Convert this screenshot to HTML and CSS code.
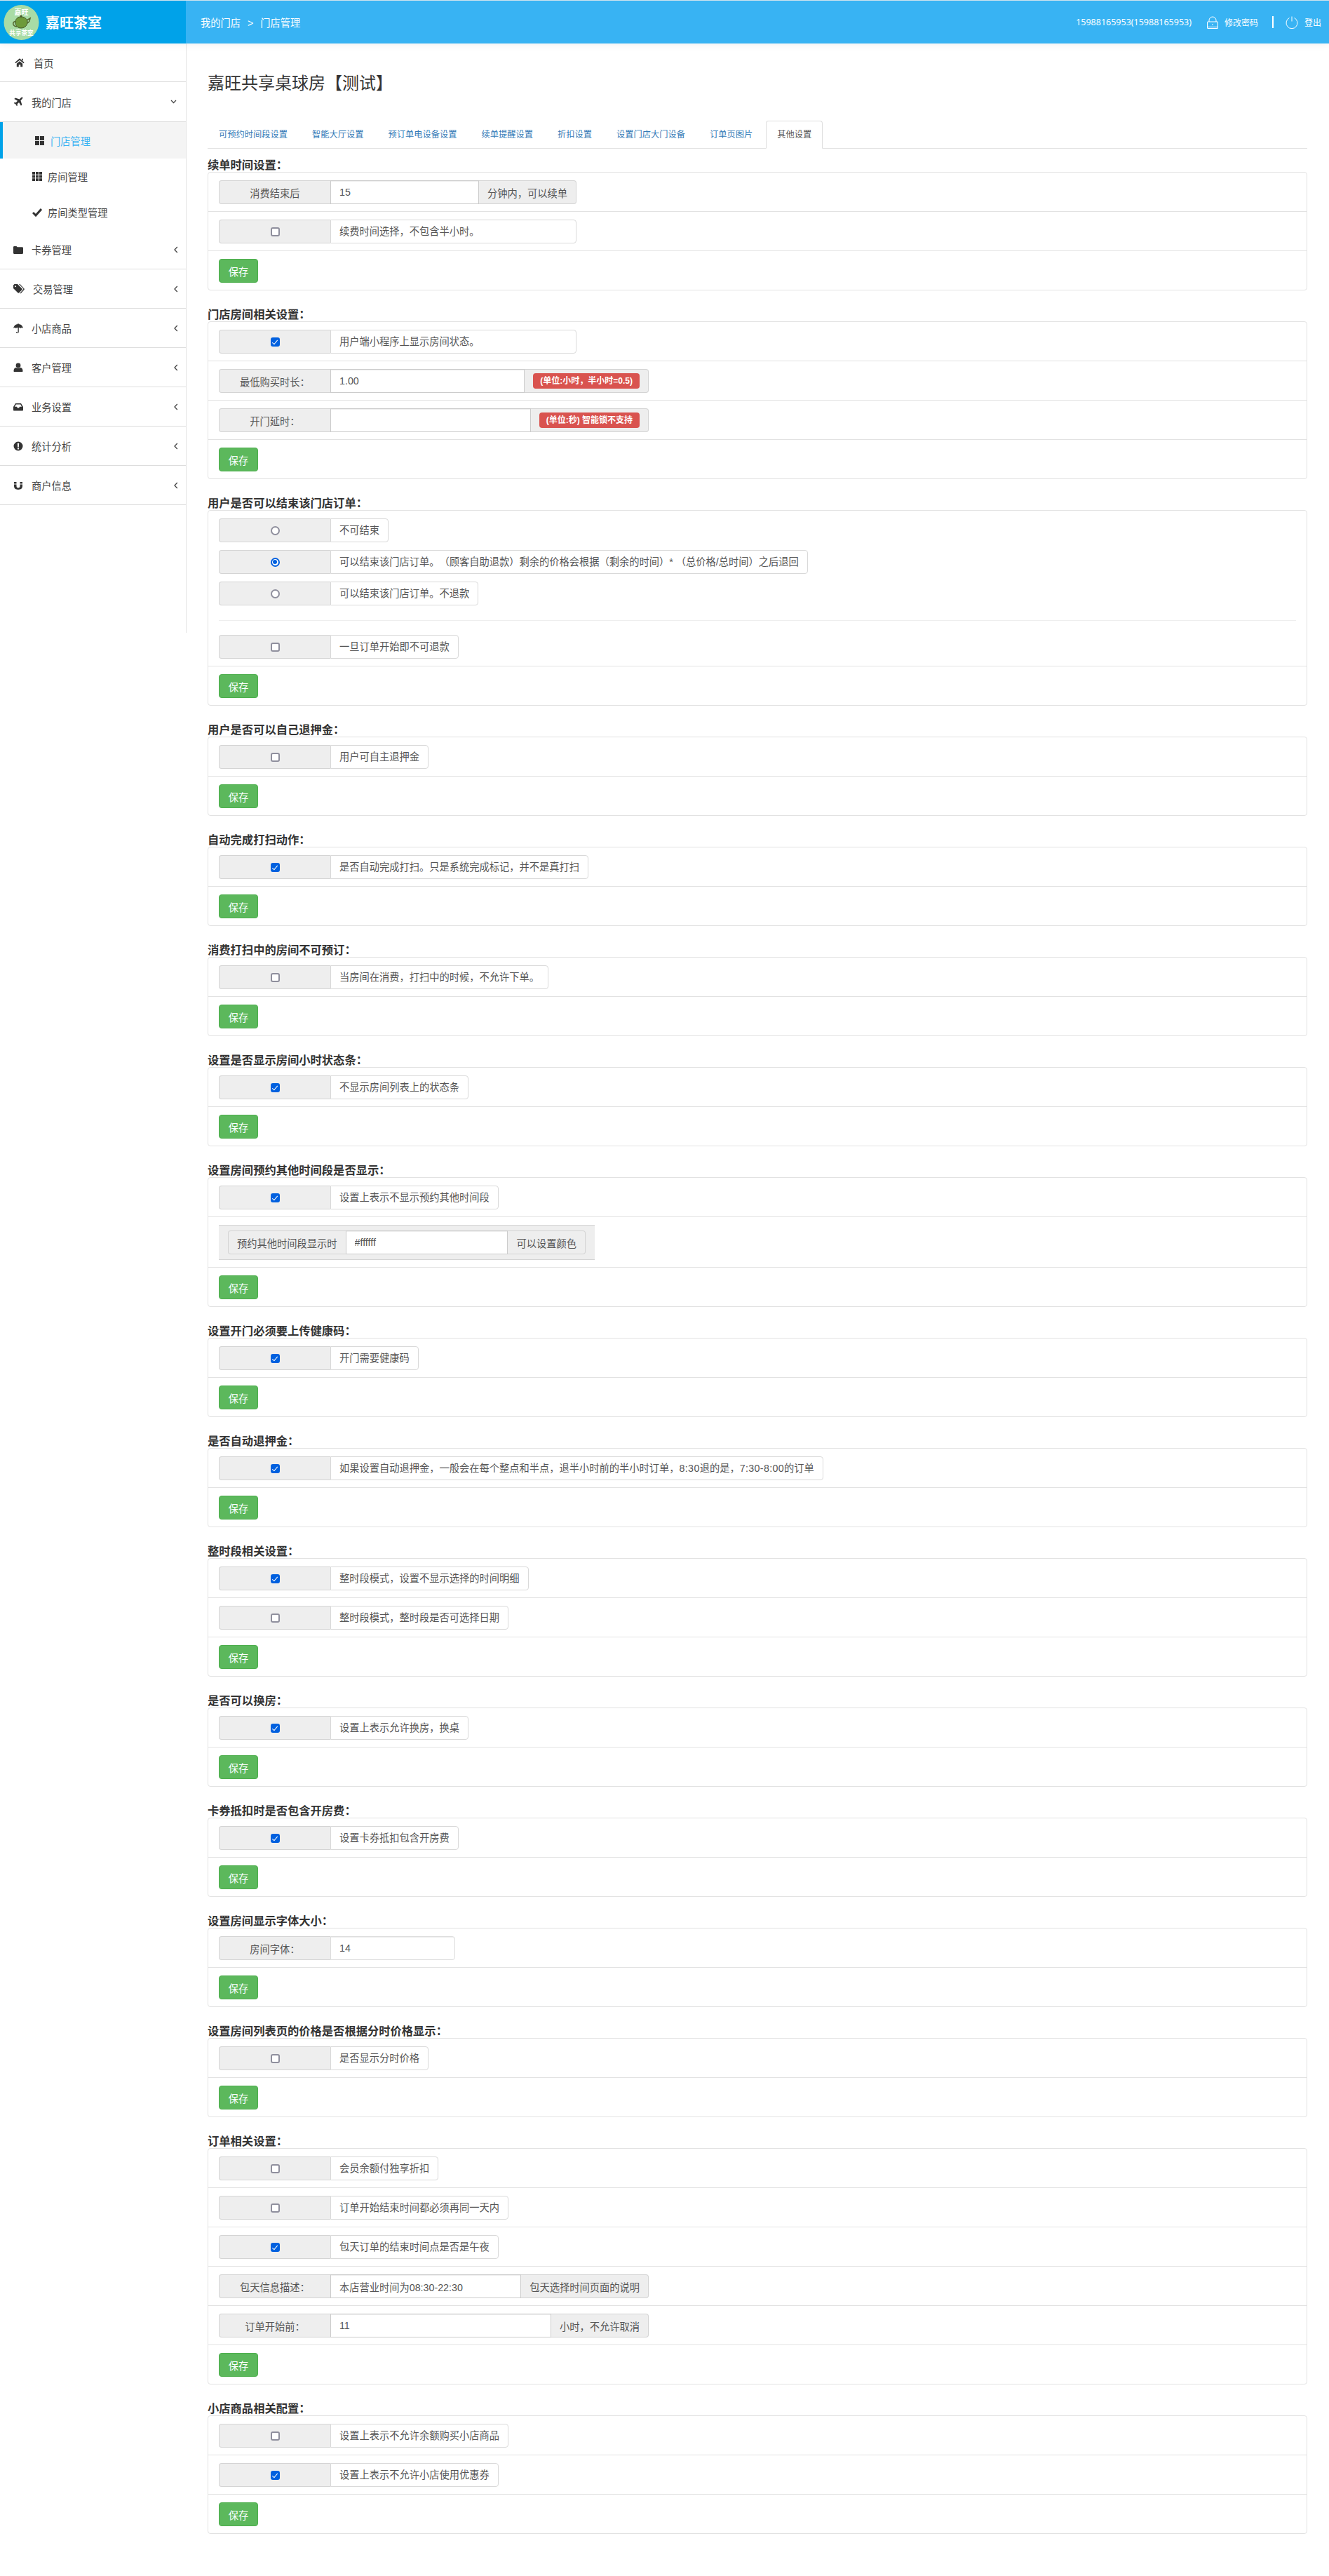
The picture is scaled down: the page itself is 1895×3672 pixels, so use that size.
FILE: index.html
```html
<!DOCTYPE html>
<html lang="zh-CN">
<head>
  <meta charset="UTF-8">
  <title>门店管理</title>
  <link rel="stylesheet" href="styles.css">
</head>
<body>
  <svg class="sprite" width="0" height="0">
    <symbol id="chev-left" viewBox="0 0 6 10"><path d="M4.8 1 1 5l3.8 4" fill="none" stroke="#444" stroke-width="1.3"/></symbol>
  </svg>

  <!-- top bar -->
  <header class="topbar">
    <div class="brand">
      <svg class="logo" width="51" height="50" viewBox="0 0 51 50">
        <circle cx="25.5" cy="25" r="25" fill="#a9dca6"/>
        <text x="25.5" y="14" class="logo-text" font-size="10">嘉旺</text>
        <path d="M18 24c-3-1-5 1-4 4 1 2 3 3 5 3M33 22l5-3-1 4c-1 2-2 3-4 3" fill="none" stroke="#54682f" stroke-width="1.6"/>
        <path d="M17 23c1-4 4-6 8-6s8 2 9 6c1 5-3 10-9 10s-9-5-8-10z" fill="#6d9a3a" stroke="#44562a"/>
        <circle cx="25" cy="16" r="1.6" fill="#44562a"/>
        <text x="25.5" y="43" class="logo-text" font-size="8.6">共享茶室</text>
      </svg>
      <span class="brand-name">嘉旺茶室</span>
    </div>
    <div class="topbar-main">
      <div class="crumbs"><span>我的门店</span><span class="crumb-sep">&gt;</span><span>门店管理</span></div>
      <div class="user-tools">
        <span class="user-name">15988165953(15988165953)</span>
        <svg class="tool-icon" width="16" height="18" viewBox="0 0 16 18" fill="none" stroke="#fff" stroke-width="1">
          <path d="M3 8V6a5 5 0 0 1 10 0v2"/><rect x=".5" y="8" width="15" height="9.5" rx=".5"/><path d="M.5 15.5h15M8 11v2" />
        </svg>
        <a class="tool-link">修改密码</a>
        <span class="tool-sep"></span>
        <svg class="tool-icon power" width="18" height="18" viewBox="0 0 18 18" fill="none" stroke="#fff" stroke-width="1">
          <path d="M5.5 2.5a8 8 0 1 0 7 0M9 .5v7"/>
        </svg>
        <a class="tool-link">登出</a>
      </div>
    </div>
  </header>

  <div class="layout">
    <!-- left nav -->
    <nav class="sidebar">
      <a class="nav-item nav-home">
        <svg class="nav-icon" width="14" height="14" viewBox="0 0 16 16"><path d="M8 1.5 15.6 8l-1.2 1.4L8 4.2 1.6 9.4.4 8zM11.5 2h2v3.4l-2-1.7zM3.2 10 8 6l4.8 4v5H9.4v-3.4H6.6V15H3.2z"/></svg>
        <span>首页</span>
      </a>
      <a class="nav-item nav-open">
        <svg class="nav-icon" width="14" height="14" viewBox="0 0 16 16"><path d="M15.4 1c-.7-.8-2-.5-2.900.4L10 3.900 3.200 1.700 1.500 3.300l5.400 3.300-2.700 2.800-2.200-.4L.7 10.300l3.100 1.800 1.800 3.100 1.200-1.200-.4-2.200 2.800-2.700 3.300 5.400 1.600-1.700-2.200-6.800 2.500-2.500c.9-.9 1.200-2.200.5-2.800z"/></svg>
        <span>我的门店</span>
        <svg class="chev-down" width="9" height="6" viewBox="0 0 9 6"><path d="M1 1l3.500 3.500L8 1" fill="none" stroke="#444" stroke-width="1.300"/></svg>
      </a>
      <a class="nav-sub nav-sub-active">
        <svg width="13" height="13" viewBox="0 0 13 13"><path d="M0 0h6v6H0zM7 0h6v6H7zM0 7h6v6H0zM7 7h6v6H7z"/></svg>
        <span>门店管理</span>
      </a>
      <a class="nav-sub">
        <svg width="14" height="13" viewBox="0 0 14 13"><path d="M0 0h4v3.700H0zM5 0h4v3.700H5zM10 0h4v3.700h-4zM0 4.700h4v3.700H0zM5 4.700h4v3.700H5zM10 4.700h4v3.700h-4zM0 9.300h4V13H0zM5 9.300h4V13H5zM10 9.300h4V13h-4z"/></svg>
        <span>房间管理</span>
      </a>
      <a class="nav-sub">
        <svg width="14" height="13" viewBox="0 0 14 13"><path d="M1 7l4 4 8-9" fill="none" stroke="#333" stroke-width="3"/></svg>
        <span>房间类型管理</span>
      </a>
      <a class="nav-item">
        <svg class="nav-icon" width="14" height="14" viewBox="0 0 14 14"><path d="M0 3.500C0 2.500.5 2 1.500 2h3l1.200 1.300H12.500c1 0 1.500.5 1.500 1.500v6.700c0 .8-.6 1.500-1.500 1.500h-11C.6 13 0 12.300 0 11.500z"/></svg>
        <span>卡券管理</span>
        <svg class="chev" width="6" height="10"><use href="#chev-left"/></svg>
      </a>
      <a class="nav-item">
        <svg class="nav-icon" width="16" height="14" viewBox="0 0 16 14"><path d="M0 1.500 1.500 0H6l6.500 6.500a1 1 0 0 1 0 1.400L8 12.500a1 1 0 0 1-1.400 0L0 6zM3 2.200a1 1 0 1 0 0 2 1 1 0 0 0 0-2zM8 0h1.500l6 6.500a1 1 0 0 1 0 1.400l-4.500 5c-.5.500-1.200.5-1.700.1l4.700-5.300c.4-.5.400-1 0-1.400z"/></svg>
        <span>交易管理</span>
        <svg class="chev" width="6" height="10"><use href="#chev-left"/></svg>
      </a>
      <a class="nav-item">
        <svg class="nav-icon" width="14" height="14" viewBox="0 0 14 14"><path d="M6.500 0h1v1C11 1.300 13.500 3.500 14 7c-1-1.300-2.500-1.300-3.500 0-.7-1-1.800-1.300-2.700-1V12c0 1.300-.8 2-2 2s-2-.7-2-2h1.200c0 .6.200 1 .8 1s.7-.4.700-1V6c-.9-.3-2 0-2.700 1C2.800 5.700 1 5.700 0 7c.5-3.500 3-5.700 6.500-6z"/></svg>
        <span>小店商品</span>
        <svg class="chev" width="6" height="10"><use href="#chev-left"/></svg>
      </a>
      <a class="nav-item">
        <svg class="nav-icon" width="14" height="14" viewBox="0 0 14 14"><circle cx="7" cy="4" r="3.400"/><path d="M1.500 13c-.6 0-1-.4-1-1 0-2.800 1.200-4.800 3.300-5 .8.700 1.900 1 3.200 1s2.400-.3 3.200-1c2.100.2 3.300 2.200 3.300 5 0 .6-.4 1-1 1z"/></svg>
        <span>客户管理</span>
        <svg class="chev" width="6" height="10"><use href="#chev-left"/></svg>
      </a>
      <a class="nav-item">
        <svg class="nav-icon" width="14" height="14" viewBox="0 0 14 14"><path d="M3 2h8l3 5v4.500c0 .5-.5 1-1 1H1c-.5 0-1-.5-1-1V7zm.8 1.500L2 6.800h3l.9 1.700h2.200L9 6.800h3l-1.800-3.300z"/></svg>
        <span>业务设置</span>
        <svg class="chev" width="6" height="10"><use href="#chev-left"/></svg>
      </a>
      <a class="nav-item">
        <svg class="nav-icon" width="14" height="14" viewBox="0 0 14 14"><path fill-rule="evenodd" d="M7 .5a6.500 6.500 0 1 1 0 13 6.500 6.500 0 0 1 0-13zM5.800 2.800l.4 5.600h1.600l.4-5.600zM5.900 9.500v2h2.200v-2z"/></svg>
        <span>统计分析</span>
        <svg class="chev" width="6" height="10"><use href="#chev-left"/></svg>
      </a>
      <a class="nav-item">
        <svg class="nav-icon" width="14" height="14" viewBox="0 0 14 14"><path d="M1 2h3.500v2.500H1zM9.500 2H13v2.500H9.500zM1 5.500h3.500v2.300c0 1.700 1 2.700 2.500 2.700s2.500-1 2.500-2.700V5.500H13v2.300c0 3.400-2.300 5.200-6 5.200S1 11.200 1 7.800z"/></svg>
        <span>商户信息</span>
        <svg class="chev" width="6" height="10"><use href="#chev-left"/></svg>
      </a>
    </nav>

    <main class="content">
      <h1 class="page-title">嘉旺共享桌球房【测试】</h1>

      <ul class="tabs">
        <li><a>可预约时间段设置</a></li>
        <li><a>智能大厅设置</a></li>
        <li><a>预订单电设备设置</a></li>
        <li><a>续单提醒设置</a></li>
        <li><a>折扣设置</a></li>
        <li><a>设置门店大门设备</a></li>
        <li><a>订单页图片</a></li>
        <li class="active"><a>其他设置</a></li>
      </ul>

      <section class="section">
        <h4 class="section-title">续单时间设置：</h4>
        <div class="panel">
          <div class="row">
            <div class="group w-510">
              <span class="addon addon-label">消费结束后</span>
              <input class="field" type="text" value="15">
              <span class="addon">分钟内，可以续单</span>
            </div>
          </div>
          <div class="row">
            <div class="group w-510">
              <span class="addon addon-label"><input type="checkbox"></span>
              <span class="note note-fill">续费时间选择，不包含半小时。</span>
            </div>
          </div>
          <div class="row"><button class="btn-save">保存</button></div>
        </div>
      </section>

      <section class="section">
        <h4 class="section-title">门店房间相关设置：</h4>
        <div class="panel">
          <div class="row">
            <div class="group w-510">
              <span class="addon addon-label"><input type="checkbox" checked></span>
              <span class="note note-fill">用户端小程序上显示房间状态。</span>
            </div>
          </div>
          <div class="row">
            <div class="group w-613">
              <span class="addon addon-label">最低购买时长：</span>
              <input class="field" type="text" value="1.00">
              <span class="addon"><span class="tag-red">(单位:小时，半小时=0.5)</span></span>
            </div>
          </div>
          <div class="row">
            <div class="group w-613">
              <span class="addon addon-label">开门延时：</span>
              <input class="field" type="text">
              <span class="addon"><span class="tag-red">(单位:秒) 智能锁不支持</span></span>
            </div>
          </div>
          <div class="row"><button class="btn-save">保存</button></div>
        </div>
      </section>

      <section class="section">
        <h4 class="section-title">用户是否可以结束该门店订单：</h4>
        <div class="panel">
          <div class="row">
            <div class="group stacked">
              <span class="addon addon-label"><input type="radio" name="finish"></span>
              <span class="note">不可结束</span>
            </div>
            <div class="group stacked">
              <span class="addon addon-label"><input type="radio" name="finish" checked></span>
              <span class="note">可以结束该门店订单。（顾客自助退款）剩余的价格会根据（剩余的时间）* （总价格/总时间）之后退回</span>
            </div>
            <div class="group">
              <span class="addon addon-label"><input type="radio" name="finish"></span>
              <span class="note">可以结束该门店订单。不退款</span>
            </div>
            <hr class="row-rule">
            <div class="group">
              <span class="addon addon-label"><input type="checkbox"></span>
              <span class="note">一旦订单开始即不可退款</span>
            </div>
          </div>
          <div class="row"><button class="btn-save">保存</button></div>
        </div>
      </section>

      <section class="section">
        <h4 class="section-title">用户是否可以自己退押金：</h4>
        <div class="panel">
          <div class="row">
            <div class="group">
              <span class="addon addon-label"><input type="checkbox"></span>
              <span class="note">用户可自主退押金</span>
            </div>
          </div>
          <div class="row"><button class="btn-save">保存</button></div>
        </div>
      </section>

      <section class="section">
        <h4 class="section-title">自动完成打扫动作：</h4>
        <div class="panel">
          <div class="row">
            <div class="group">
              <span class="addon addon-label"><input type="checkbox" checked></span>
              <span class="note">是否自动完成打扫。只是系统完成标记，并不是真打扫</span>
            </div>
          </div>
          <div class="row"><button class="btn-save">保存</button></div>
        </div>
      </section>

      <section class="section">
        <h4 class="section-title">消费打扫中的房间不可预订：</h4>
        <div class="panel">
          <div class="row">
            <div class="group">
              <span class="addon addon-label"><input type="checkbox"></span>
              <span class="note">当房间在消费，打扫中的时候，不允许下单。</span>
            </div>
          </div>
          <div class="row"><button class="btn-save">保存</button></div>
        </div>
      </section>

      <section class="section">
        <h4 class="section-title">设置是否显示房间小时状态条：</h4>
        <div class="panel">
          <div class="row">
            <div class="group">
              <span class="addon addon-label"><input type="checkbox" checked></span>
              <span class="note">不显示房间列表上的状态条</span>
            </div>
          </div>
          <div class="row"><button class="btn-save">保存</button></div>
        </div>
      </section>

      <section class="section">
        <h4 class="section-title">设置房间预约其他时间段是否显示：</h4>
        <div class="panel">
          <div class="row">
            <div class="group">
              <span class="addon addon-label"><input type="checkbox" checked></span>
              <span class="note">设置上表示不显示预约其他时间段</span>
            </div>
          </div>
          <div class="row">
            <div class="color-box">
              <div class="group w-510">
                <span class="addon">预约其他时间段显示时</span>
                <input class="field" type="text" value="#ffffff">
                <span class="addon">可以设置颜色</span>
              </div>
            </div>
          </div>
          <div class="row"><button class="btn-save">保存</button></div>
        </div>
      </section>

      <section class="section">
        <h4 class="section-title">设置开门必须要上传健康码：</h4>
        <div class="panel">
          <div class="row">
            <div class="group">
              <span class="addon addon-label"><input type="checkbox" checked></span>
              <span class="note">开门需要健康码</span>
            </div>
          </div>
          <div class="row"><button class="btn-save">保存</button></div>
        </div>
      </section>

      <section class="section">
        <h4 class="section-title">是否自动退押金：</h4>
        <div class="panel">
          <div class="row">
            <div class="group">
              <span class="addon addon-label"><input type="checkbox" checked></span>
              <span class="note">如果设置自动退押金，一般会在每个整点和半点，退半小时前的半小时订单，<span class="digits">8:30</span>退的是，<span class="digits">7:30-8:00</span>的订单</span>
            </div>
          </div>
          <div class="row"><button class="btn-save">保存</button></div>
        </div>
      </section>

      <section class="section">
        <h4 class="section-title">整时段相关设置：</h4>
        <div class="panel">
          <div class="row">
            <div class="group">
              <span class="addon addon-label"><input type="checkbox" checked></span>
              <span class="note">整时段模式，设置不显示选择的时间明细</span>
            </div>
          </div>
          <div class="row">
            <div class="group">
              <span class="addon addon-label"><input type="checkbox"></span>
              <span class="note">整时段模式，整时段是否可选择日期</span>
            </div>
          </div>
          <div class="row"><button class="btn-save">保存</button></div>
        </div>
      </section>

      <section class="section">
        <h4 class="section-title">是否可以换房：</h4>
        <div class="panel">
          <div class="row">
            <div class="group">
              <span class="addon addon-label"><input type="checkbox" checked></span>
              <span class="note">设置上表示允许换房，换桌</span>
            </div>
          </div>
          <div class="row"><button class="btn-save">保存</button></div>
        </div>
      </section>

      <section class="section">
        <h4 class="section-title">卡券抵扣时是否包含开房费：</h4>
        <div class="panel">
          <div class="row">
            <div class="group">
              <span class="addon addon-label"><input type="checkbox" checked></span>
              <span class="note">设置卡券抵扣包含开房费</span>
            </div>
          </div>
          <div class="row"><button class="btn-save">保存</button></div>
        </div>
      </section>

      <section class="section">
        <h4 class="section-title">设置房间显示字体大小：</h4>
        <div class="panel">
          <div class="row">
            <div class="group w-337">
              <span class="addon addon-label">房间字体：</span>
              <input class="field field-end" type="text" value="14">
            </div>
          </div>
          <div class="row"><button class="btn-save">保存</button></div>
        </div>
      </section>

      <section class="section">
        <h4 class="section-title">设置房间列表页的价格是否根据分时价格显示：</h4>
        <div class="panel">
          <div class="row">
            <div class="group">
              <span class="addon addon-label"><input type="checkbox"></span>
              <span class="note">是否显示分时价格</span>
            </div>
          </div>
          <div class="row"><button class="btn-save">保存</button></div>
        </div>
      </section>

      <section class="section">
        <h4 class="section-title">订单相关设置：</h4>
        <div class="panel">
          <div class="row">
            <div class="group">
              <span class="addon addon-label"><input type="checkbox"></span>
              <span class="note">会员余额付独享折扣</span>
            </div>
          </div>
          <div class="row">
            <div class="group">
              <span class="addon addon-label"><input type="checkbox"></span>
              <span class="note">订单开始结束时间都必须再同一天内</span>
            </div>
          </div>
          <div class="row">
            <div class="group">
              <span class="addon addon-label"><input type="checkbox" checked></span>
              <span class="note">包天订单的结束时间点是否是午夜</span>
            </div>
          </div>
          <div class="row">
            <div class="group w-613">
              <span class="addon addon-label">包天信息描述：</span>
              <input class="field" type="text" value="本店营业时间为08:30-22:30">
              <span class="addon">包天选择时间页面的说明</span>
            </div>
          </div>
          <div class="row">
            <div class="group w-613">
              <span class="addon addon-label">订单开始前：</span>
              <input class="field" type="text" value="11">
              <span class="addon">小时，不允许取消</span>
            </div>
          </div>
          <div class="row"><button class="btn-save">保存</button></div>
        </div>
      </section>

      <section class="section">
        <h4 class="section-title">小店商品相关配置：</h4>
        <div class="panel">
          <div class="row">
            <div class="group">
              <span class="addon addon-label"><input type="checkbox"></span>
              <span class="note">设置上表示不允许余额购买小店商品</span>
            </div>
          </div>
          <div class="row">
            <div class="group">
              <span class="addon addon-label"><input type="checkbox" checked></span>
              <span class="note">设置上表示不允许小店使用优惠券</span>
            </div>
          </div>
          <div class="row"><button class="btn-save">保存</button></div>
        </div>
      </section>
    </main>
  </div>
</body>
</html>
```

FILE: styles.css
```css
* {
  box-sizing: border-box;
}

body {
  margin: 0;
  font-family: "Liberation Sans", "Noto Sans CJK SC", sans-serif;
  font-size: 14.25px;
  text-spacing-trim: space-all;
  color: #555;
  background-color: #fff;
}

.sprite {
  position: absolute;
}

/* top bar */
.topbar {
  display: flex;
  height: 62px;
  border-top: 1px solid #cfe3ee;
  color: #fff;
  box-shadow: 0 2px 10px rgba(0, 0, 0, 0.06);
  position: relative;
}

.brand {
  display: flex;
  align-items: center;
  width: 265px;
  padding-left: 5px;
  background-color: #00a2e9;
}

.logo-text {
  fill: #fff;
  font-weight: 700;
  text-anchor: middle;
}

.brand-name {
  margin-left: 9px;
  font-size: 20px;
  font-weight: 700;
}

.topbar-main {
  flex: 1;
  display: flex;
  align-items: center;
  justify-content: space-between;
  padding: 0 11px 0 21px;
  background-color: #38b3f3;
}

.crumb-sep {
  margin: 0 10px;
}

.user-tools {
  display: flex;
  align-items: center;
  font-size: 12px;
}

.user-name {
  font-family: "Noto Sans", "Noto Sans CJK SC", sans-serif;
  font-size: 12.5px;
  margin-right: 22px;
}

.tool-icon {
  margin-right: 9px;
}

.tool-sep {
  width: 2px;
  height: 17px;
  margin: 0 17px 0 20px;
  background-color: #fff;
}

/* sidebar */
.layout {
  display: flex;
  align-items: flex-start;
}

.sidebar {
  flex: none;
  width: 266px;
  height: 840px;
  border-right: 1px solid #e4e4e4;
}

.nav-item,
.nav-sub {
  display: flex;
  align-items: center;
  color: #444;
}

.nav-item {
  height: 56px;
  padding: 0 11px 0 19px;
  border-bottom: 1px solid #ddd;
}

.nav-item svg {
  fill: #333;
}

.nav-item span {
  flex: 1;
}

.nav-icon {
  margin-right: 12px;
}

.nav-home {
  height: 55px;
  padding-left: 21px;
}

.nav-home .nav-icon {
  margin-right: 13px;
}

.nav-open {
  height: 57px;
}

.chev-down {
  margin-right: 2px;
}

.nav-sub {
  height: 51px;
  padding-left: 46px;
  color: #444;
}

.nav-sub svg {
  margin-right: 8px;
  fill: #333;
}

.nav-sub-active {
  height: 52px;
  padding-left: 46px;
  background-color: #f4f4f4;
  border-left: 4px solid #00a2e9;
  color: #38b3f3;
}

.nav-sub-active svg {
  margin-right: 9px;
}

/* main column */
.content {
  flex: 1;
  min-width: 0;
  padding: 40px 31px 37px 30px;
}

.page-title {
  margin: 0 0 36px;
  font-size: 24px;
  font-weight: 400;
  line-height: 34px;
  color: #333;
}

.tabs {
  display: flex;
  height: 40px;
  margin: 0 0 13px;
  padding: 0;
  list-style: none;
  border-bottom: 1px solid #e2e2e2;
  font-size: 12.25px;
}

.tabs li {
  margin-right: 3px;
  height: 40px;
}

.tabs a {
  display: block;
  height: 40px;
  padding: 10px 15px;
  border: 1px solid transparent;
  line-height: 18px;
  color: #337ab7;
}

.tabs .active a {
  background-color: #fff;
  border-color: #ddd #ddd #fff;
  border-radius: 4px 4px 0 0;
  color: #555;
}

.section {
  margin-bottom: 24px;
}

.section-title {
  margin: 0;
  font-size: 16.3px;
  font-weight: 700;
  line-height: 20px;
  color: #333;
}

.panel {
  border: 1px solid #e2e2e2;
  border-radius: 4px;
}

.row {
  padding: 11px 15px 10px;
  border-bottom: 1px solid #e2e2e2;
}

.row:last-child {
  border-bottom: none;
}

.row-rule {
  height: 1px;
  margin: 21px 0 20px;
  border: none;
  background-color: #eee;
}

/* input groups */
.group {
  display: flex;
  width: fit-content;
  height: 34px;
}

.group.stacked {
  margin-bottom: 11px;
}

.w-510 {
  width: 510px;
}

.w-613 {
  width: 613px;
}

.w-337 {
  width: 337px;
}

.addon {
  flex: none;
  display: flex;
  align-items: center;
  justify-content: center;
  padding: 0 12px;
  background-color: #eee;
  border: 1px solid #d4d4d4;
  border-radius: 0 4px 4px 0;
  border-left: none;
  white-space: nowrap;
}

.addon:first-child {
  border-left: 1px solid #d4d4d4;
  border-right: none;
  border-radius: 4px 0 0 4px;
}

.addon-label {
  width: 159px;
}

.field {
  flex: 1;
  min-width: 0;
  height: 34px;
  padding: 0 12px;
  border: 1px solid #ccc;
  border-radius: 0;
  box-shadow: inset 0 1px 1px rgba(0, 0, 0, 0.075);
  font: inherit;
  color: #555;
  outline: none;
}

.field-end {
  border-radius: 0 4px 4px 0;
  border-color: #ddd;
}

.note {
  padding: 0 12px;
  line-height: 32px;
  background-color: #fff;
  border: 1px solid #d9d9d9;
  border-radius: 0 4px 4px 0;
  white-space: nowrap;
}

.note-fill {
  flex: 1;
}

.digits {
  letter-spacing: 0.35px;
}

.tag-red {
  padding: 0 10px;
  line-height: 22px;
  background-color: #d9534f;
  border-radius: 4px;
  color: #fff;
  font-size: 12px;
  font-weight: 700;
}

.color-box {
  width: 536px;
  padding: 7px 13px;
  background-color: #eee;
  border-top: 1px solid #d4d4d4;
  border-bottom: 1px solid #d4d4d4;
}

.btn-save {
  display: block;
  width: 56px;
  height: 34px;
  padding: 0;
  background-color: #5cb85c;
  border: 1px solid #4cae4c;
  border-radius: 4px;
  color: #fff;
  font: inherit;
}

/* firefox-looking checks */
input[type="checkbox"],
input[type="radio"] {
  appearance: none;
  position: relative;
  width: 13px;
  height: 13px;
  margin: 0;
  background-color: #fff;
  border: 2px solid #8f8f9d;
  border-radius: 3px;
}

input[type="radio"] {
  border-radius: 50%;
}

input[type="checkbox"]:checked {
  background-color: #0060df;
  border-color: #0060df;
}

input[type="checkbox"]:checked::after {
  content: "";
  position: absolute;
  left: 2.5px;
  top: 0;
  width: 3px;
  height: 7px;
  border: solid #fff;
  border-width: 0 1.6px 1.6px 0;
  transform: rotate(40deg);
}

input[type="radio"]:checked {
  border-color: #0060df;
}

input[type="radio"]:checked::after {
  content: "";
  position: absolute;
  left: 1.5px;
  top: 1.5px;
  width: 6px;
  height: 6px;
  border-radius: 50%;
  background-color: #0060df;
}
```
